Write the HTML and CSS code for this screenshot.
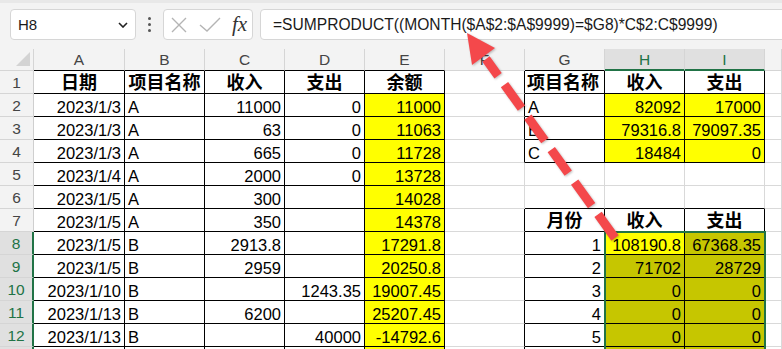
FILE: index.html
```html
<!DOCTYPE html>
<html lang="zh-CN">
<head>
    <meta charset="UTF-8">
    <title>SUMPRODUCT 按月汇总</title>
    <link rel="stylesheet" href="styles.css">
</head>
<body>
<div class="page">

    <!-- 编辑栏 -->
    <div class="fbar">
        <div class="namebox">
            <span>H8</span>
            <svg class="chev" width="10" height="6" viewBox="0 0 10 6"><polyline points="1,1 5,5 9,1" fill="none" stroke="#222" stroke-width="1.6"/></svg>
        </div>
        <div class="dots"><i></i><i></i><i></i></div>
        <div class="iconbox">
            <svg width="16" height="16" viewBox="0 0 16 16"><path d="M1 1 L15 15 M15 1 L1 15" stroke="#b4b4b4" stroke-width="1.4" fill="none"/></svg>
            <svg width="22" height="16" viewBox="0 0 22 16"><polyline points="1,8 8,14 21,1" stroke="#b4b4b4" stroke-width="1.4" fill="none"/></svg>
            <span class="fx">fx</span>
        </div>
        <div class="formula">=SUMPRODUCT((MONTH($A$2:$A$9999)=$G8)*C$2:C$9999)</div>
    </div>

    <!-- 工作表 -->
    <div class="grid">
        <div class="hd corner"></div>
        <div class="hd kb">A</div>
        <div class="hd kb">B</div>
        <div class="hd kb">C</div>
        <div class="hd kb">D</div>
        <div class="hd kb">E</div>
        <div class="hd">F</div>
        <div class="hd kb">G</div>
        <div class="hd sel">H</div>
        <div class="hd sel">I</div>
        <div class="hd"></div>

        <!-- 1 -->
        <div class="rh">1</div>
        <div class="c k t">日期</div>
        <div class="c k t">项目名称</div>
        <div class="c k t">收入</div>
        <div class="c k t">支出</div>
        <div class="c k t">余额</div>
        <div class="c kr"></div>
        <div class="c k t l">项目名称</div>
        <div class="c k t">收入</div>
        <div class="c k t">支出</div>
        <div class="c"></div>

        <!-- 2 -->
        <div class="rh">2</div>
        <div class="c k n">2023/1/3</div>
        <div class="c k">A</div>
        <div class="c k n">11000</div>
        <div class="c k n">0</div>
        <div class="c k n y">11000</div>
        <div class="c kr"></div>
        <div class="c k">A</div>
        <div class="c k n y">82092</div>
        <div class="c k n y">17000</div>
        <div class="c"></div>

        <!-- 3 -->
        <div class="rh">3</div>
        <div class="c k n">2023/1/3</div>
        <div class="c k">A</div>
        <div class="c k n">63</div>
        <div class="c k n">0</div>
        <div class="c k n y">11063</div>
        <div class="c kr"></div>
        <div class="c k">B</div>
        <div class="c k n y">79316.8</div>
        <div class="c k n y">79097.35</div>
        <div class="c"></div>

        <!-- 4 -->
        <div class="rh">4</div>
        <div class="c k n">2023/1/3</div>
        <div class="c k">A</div>
        <div class="c k n">665</div>
        <div class="c k n">0</div>
        <div class="c k n y">11728</div>
        <div class="c kr"></div>
        <div class="c k">C</div>
        <div class="c k n y">18484</div>
        <div class="c k n y">0</div>
        <div class="c"></div>

        <!-- 5 -->
        <div class="rh">5</div>
        <div class="c k n">2023/1/4</div>
        <div class="c k">A</div>
        <div class="c k n">2000</div>
        <div class="c k n">0</div>
        <div class="c k n y">13728</div>
        <div class="c"></div>
        <div class="c"></div>
        <div class="c"></div>
        <div class="c"></div>
        <div class="c"></div>

        <!-- 6 -->
        <div class="rh">6</div>
        <div class="c k n">2023/1/5</div>
        <div class="c k">A</div>
        <div class="c k n">300</div>
        <div class="c k n"></div>
        <div class="c k n y">14028</div>
        <div class="c"></div>
        <div class="c kb"></div>
        <div class="c kb"></div>
        <div class="c kb"></div>
        <div class="c"></div>

        <!-- 7 -->
        <div class="rh">7</div>
        <div class="c k n">2023/1/5</div>
        <div class="c k">A</div>
        <div class="c k n">350</div>
        <div class="c k n"></div>
        <div class="c k n y">14378</div>
        <div class="c kr"></div>
        <div class="c k t">月份</div>
        <div class="c k t">收入</div>
        <div class="c k t">支出</div>
        <div class="c"></div>

        <!-- 8 -->
        <div class="rh on">8</div>
        <div class="c k n">2023/1/5</div>
        <div class="c k">B</div>
        <div class="c k n">2913.8</div>
        <div class="c k n"></div>
        <div class="c k n y">17291.8</div>
        <div class="c kr"></div>
        <div class="c k n">1</div>
        <div class="c k n y">108190.8</div>
        <div class="c k n o">67368.35</div>
        <div class="c"></div>

        <!-- 9 -->
        <div class="rh on">9</div>
        <div class="c k n">2023/1/5</div>
        <div class="c k">B</div>
        <div class="c k n">2959</div>
        <div class="c k n"></div>
        <div class="c k n y">20250.8</div>
        <div class="c kr"></div>
        <div class="c k n">2</div>
        <div class="c k n o">71702</div>
        <div class="c k n o">28729</div>
        <div class="c"></div>

        <!-- 10 -->
        <div class="rh on">10</div>
        <div class="c k n">2023/1/10</div>
        <div class="c k">B</div>
        <div class="c k n"></div>
        <div class="c k n">1243.35</div>
        <div class="c k n y">19007.45</div>
        <div class="c kr"></div>
        <div class="c k n">3</div>
        <div class="c k n o">0</div>
        <div class="c k n o">0</div>
        <div class="c"></div>

        <!-- 11 -->
        <div class="rh on">11</div>
        <div class="c k n">2023/1/13</div>
        <div class="c k">B</div>
        <div class="c k n">6200</div>
        <div class="c k n"></div>
        <div class="c k n y">25207.45</div>
        <div class="c kr"></div>
        <div class="c k n">4</div>
        <div class="c k n o">0</div>
        <div class="c k n o">0</div>
        <div class="c"></div>

        <!-- 12 -->
        <div class="rh on">12</div>
        <div class="c k n">2023/1/13</div>
        <div class="c k">B</div>
        <div class="c k n"></div>
        <div class="c k n">40000</div>
        <div class="c k n y">-14792.6</div>
        <div class="c kr"></div>
        <div class="c k n">5</div>
        <div class="c k n o">0</div>
        <div class="c k n o">0</div>
        <div class="c"></div>

        <!-- 13（只露出一条边） -->
        <div class="rh on"></div>
        <div class="c k"></div>
        <div class="c k"></div>
        <div class="c k"></div>
        <div class="c k"></div>
        <div class="c k y"></div>
        <div class="c kr"></div>
        <div class="c k"></div>
        <div class="c k o"></div>
        <div class="c k o"></div>
        <div class="c"></div>

        <!-- 选区 H8:I13 -->
        <div class="selbox"></div>
    </div>

    <!-- 红色箭头 -->
    <svg class="arrow" width="782" height="349" viewBox="0 0 782 349">
        <line x1="615" y1="238" x2="486" y2="59" stroke="#f4484b" stroke-width="9" stroke-dasharray="29 11"/>
        <polygon points="467,33 495,48 472,65" fill="#f4484b"/>
    </svg>
</div>
</body>
</html>
```

FILE: styles.css
```css
* {
    margin: 0;
    padding: 0;
    box-sizing: border-box;
}

body {
    background-color: #fff;
    font-family: "Liberation Sans", "Noto Sans CJK SC", sans-serif;
    color: #000;
    overflow: hidden;
    height: 349px;
}

.page {
    position: relative;
    width: 782px;
    height: 349px;
    overflow: hidden;
}

/* 编辑栏 */
.fbar {
    height: 49px;
    background-color: #f3f3f3;
    border-top: 3px solid #e8e8e8;
    display: flex;
    align-items: flex-start;
    padding-top: 6px;
    padding-left: 10px;
}

.namebox {
    width: 126px;
    height: 31px;
    background-color: #fff;
    border: 1px solid #d6d6d6;
    border-radius: 4px;
    display: flex;
    align-items: center;
    justify-content: space-between;
    padding: 0 7px 0 7px;
    font-size: 15px;
    color: #1a1a1a;
}

.dots {
    width: 27px;
    height: 31px;
    display: flex;
    flex-direction: column;
    align-items: center;
    justify-content: center;
    gap: 3px;
}

.dots i {
    width: 3px;
    height: 3px;
    background-color: #555;
    border-radius: 50%;
}

.iconbox {
    width: 90px;
    height: 31px;
    background-color: #fff;
    border: 1px solid #d6d6d6;
    border-radius: 4px;
    display: flex;
    align-items: center;
    padding-left: 7px;
    gap: 12px;
}

.fx {
    font-family: "Liberation Serif", serif;
    font-style: italic;
    font-size: 21px;
    color: #333;
    margin-left: -1px;
}

.formula {
    flex: 1;
    height: 31px;
    margin-left: 7px;
    margin-right: -10px;
    background-color: #fff;
    border: 1px solid #d6d6d6;
    border-radius: 4px;
    display: flex;
    align-items: center;
    padding-left: 12px;
    font-size: 15.6px;
    color: #1a1a1a;
    white-space: nowrap;
}

/* 工作表网格 */
.grid {
    position: relative;
    display: grid;
    grid-template-columns: 34px 91px repeat(8, 80px) 17px;
    grid-template-rows: 22px repeat(13, 23px);
}

.hd {
    background-color: #f3f3f3;
    border-right: 1px solid #d5d5d5;
    border-bottom: 1px solid #d5d5d5;
    font-size: 15.5px;
    color: #444;
    display: flex;
    align-items: center;
    justify-content: center;
    padding-top: 1px;
}

.hd.kb {
    border-bottom-color: #000;
}

.hd.sel {
    background-color: #e0e0e0;
    color: #217346;
    border-bottom: 2px solid #217346;
}

.corner {
    position: relative;
    border-bottom-color: #d5d5d5;
}

.corner::after {
    content: "";
    position: absolute;
    right: 3px;
    bottom: 4px;
    border-left: 14px solid transparent;
    border-bottom: 14px solid #d3d3d3;
}

.rh {
    background-color: #f3f3f3;
    border-right: 1px solid #cfcfcf;
    border-bottom: 1px solid #d5d5d5;
    font-size: 15.5px;
    color: #444;
    display: flex;
    align-items: center;
    justify-content: center;
    padding-top: 2px;
}

.rh.on {
    background-color: #e0e0e0;
    color: #217346;
    border-right: 2px solid #217346;
}

.c {
    border-right: 1px solid #d9d9d9;
    border-bottom: 1px solid #d9d9d9;
    display: flex;
    align-items: flex-end;
    padding: 0 3px 0 3px;
    font-size: 16.5px;
    line-height: 17px;
    white-space: nowrap;
    overflow: hidden;
}

.c.k {
    border-right-color: #000;
    border-bottom-color: #000;
}

.c.kr {
    border-right-color: #000;
}

.c.kb {
    border-bottom-color: #000;
}

.c.n {
    justify-content: flex-end;
    padding-right: 3px;
}

.c.t {
    justify-content: center;
    font-weight: bold;
    font-size: 18px;
    line-height: 20px;
}

.c.t.l {
    justify-content: flex-start;
    padding-left: 2px;
}

.c.y {
    background-color: #ffff00;
}

.c.o {
    background-color: #c6c600;
}

.selbox {
    position: absolute;
    grid-column: 9 / 11;
    grid-row: 9 / 15;
    top: -1px;
    left: -1px;
    right: -1px;
    bottom: -2px;
    border: 2px solid #217346;
    pointer-events: none;
}

/* 箭头 */
.arrow {
    position: absolute;
    left: 0;
    top: 0;
    pointer-events: none;
    filter: drop-shadow(1px 1px 1px rgba(0, 0, 0, 0.25));
}
```
